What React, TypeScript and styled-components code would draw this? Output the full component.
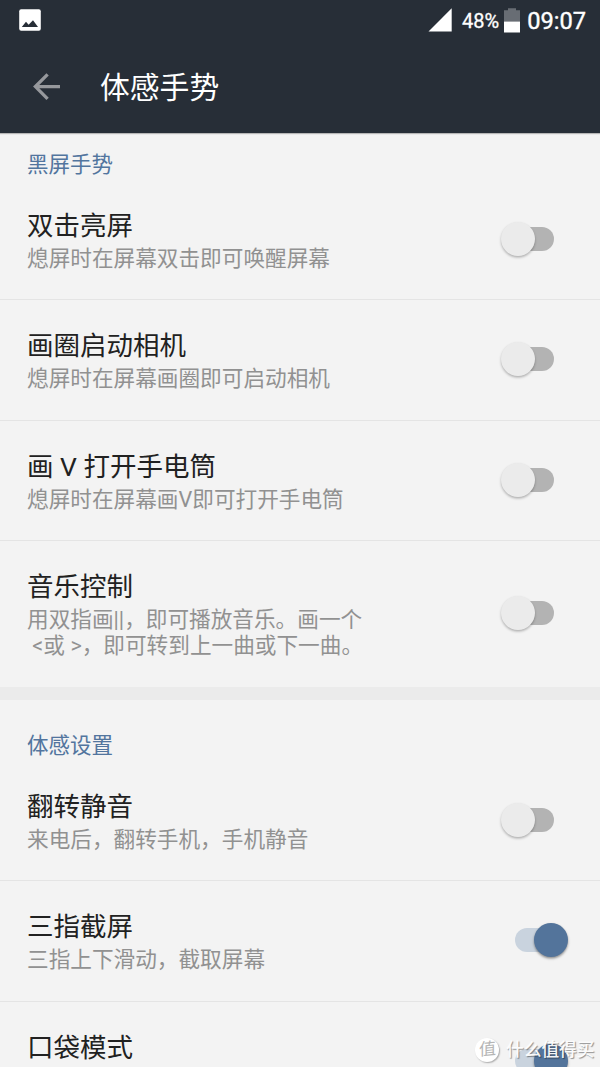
import React from "react";
import styled, { createGlobalStyle } from "styled-components";

const GlobalStyle = createGlobalStyle`
  * { box-sizing: border-box; }
  html, body { margin: 0; background: #f3f3f3; }
  body {
    font-family: Roboto, "Noto Sans CJK SC", sans-serif;
    overflow: hidden;
  }
`;

const Screen = styled.div`
  position: relative;
  width: 600px;
  height: 1067px;
  overflow: hidden;
  background: #f3f3f3;
`;

const Header = styled.header`
  height: 133.4px;
  background: #272e37;
  color: #fff;
  box-shadow: 0 1px 1px rgba(0, 0, 0, 0.25);
`;

const StatusBar = styled.div`
  display: flex;
  align-items: center;
  justify-content: space-between;
  height: 40px;
  padding: 0 14px 0 19px;
`;

const StatusGroup = styled.div`
  display: flex;
  align-items: center;
`;

const BatteryLevel = styled.span`
  margin: 1px 5px 0 10px;
  font-size: 20px;
  font-weight: 400;
  line-height: 24px;
  -webkit-text-stroke: 0.3px #fff;
`;

const Clock = styled.span`
  margin-left: 7px;
  margin-top: 1px;
  font-size: 23.6px;
  font-weight: 400;
  line-height: 28px;
  -webkit-text-stroke: 0.4px #fff;
`;

const Toolbar = styled.div`
  display: flex;
  align-items: center;
  height: 94px;
  padding-left: 33px;
`;

const PageTitle = styled.h1`
  margin: 2px 0 0 39px;
  font-size: 29.8px;
  font-weight: 400;
  line-height: 44px;
`;

const Section = styled.section``;

const SectionGap = styled.div`
  height: 13.4px;
  background: #ebebeb;
`;

const SectionTitle = styled.h2<{ $height: number }>`
  display: flex;
  align-items: flex-end;
  height: ${(p) => p.$height}px;
  margin: 0;
  padding: 0 27px;
  color: #52759e;
  font-size: 21.5px;
  font-weight: 400;
  line-height: 28px;
`;

const Row = styled.div<{ $tall?: boolean }>`
  display: flex;
  align-items: flex-start;
  justify-content: space-between;
  height: ${(p) => (p.$tall ? 146.8 : 120.56)}px;
  padding: 30px 32px 0 27px;
  box-shadow: 0 1px 0 #e4e4e4;

  &:last-child {
    box-shadow: none;
  }
`;

const RowTitle = styled.div`
  color: #212121;
  font-size: 26.5px;
  line-height: 33px;
`;

const RowSummary = styled.div`
  margin-top: 4px;
  color: #919191;
  font-size: 21.65px;
  line-height: 25.6px;
  white-space: pre;
`;

const SwitchBox = styled.div<{ $on?: boolean; $tall?: boolean }>`
  display: flex;
  align-items: center;
  justify-content: ${(p) => (p.$on ? "flex-end" : "flex-start")};
  width: 67px;
  height: 34px;
  margin-top: ${(p) => (p.$tall ? 26 : 13)}px;
`;

const Track = styled.div<{ $on?: boolean }>`
  display: flex;
  align-items: center;
  justify-content: ${(p) => (p.$on ? "flex-end" : "flex-start")};
  width: 53px;
  height: 24px;
  border-radius: 12px;
  background: ${(p) =>
    p.$on
      ? "linear-gradient(#c9d3de, #c9d3de) left / 40px 100% no-repeat"
      : "linear-gradient(#b3b3b3, #b3b3b3) right / 40px 100% no-repeat"};
`;

const Thumb = styled.div<{ $on?: boolean }>`
  width: 34px;
  height: 34px;
  flex: none;
  border-radius: 50%;
  background: ${(p) => (p.$on ? "#53749b" : "#ebebeb")};
  box-shadow: 0 1.5px 2.5px rgba(0, 0, 0, ${(p) => (p.$on ? 0.42 : 0.28)});
`;

const Watermark = styled.div`
  position: absolute;
  left: 475px;
  top: 1037px;
  display: flex;
  align-items: center;
  gap: 7px;
  color: rgba(255, 255, 255, 0.95);
  font-size: 17.7px;
  line-height: 24px;
  white-space: nowrap;
  text-shadow: 1px 1px 1px rgba(0, 0, 0, 0.4);
`;

const WatermarkSeal = styled.span`
  width: 24px;
  height: 24px;
  border-radius: 50%;
  background: #fff;
  color: #b5b5b5;
  font-size: 17px;
  line-height: 23px;
  text-align: center;
  text-shadow: none;
  box-shadow: 1px 1px 1.5px rgba(0, 0, 0, 0.3);
`;

const SealGlyph = styled.span`
  display: inline-block;
  transform: skewX(-6deg) rotate(-6deg);
`;

const WatermarkText = styled.span`
  font-weight: 500;
  padding-top: 1px;
`;

const PictureIcon = () => (
  <svg width="22" height="22" viewBox="0 0 22 22">
    <rect x="0.2" y="0.2" width="21.6" height="21.6" rx="2" fill="#fff" />
    <path d="M2.8 18L7 12.8l2.6 3L14 11.2 19 18z" fill="#272e37" />
  </svg>
);

const SignalIcon = () => (
  <svg width="24" height="24" viewBox="0 0 24 24">
    <path d="M0.5 23.6L23.7 0.3v23.3z" fill="#fff" />
  </svg>
);

const BatteryIcon = () => (
  <svg width="16" height="25" viewBox="0 0 16 25">
    <path d="M4 0.3h8v2h4V13.500H0V2.300h4z" fill="#686d74" />
    <path d="M0 13.500h16v11H0z" fill="#fff" />
  </svg>
);

const BackIcon = () => (
  <svg width="28" height="28" viewBox="0 0 28 28" fill="none" stroke="#96989c" strokeWidth="3.300">
    <path d="M27 13.600H3M14.600 1.400L2.400 13.600l12.200 12.200" />
  </svg>
);

interface Setting {
  title: string;
  summary?: string;
  on?: boolean;
  tall?: boolean;
}

const screenOff: Setting[] = [
  { title: "双击亮屏", summary: "熄屏时在屏幕双击即可唤醒屏幕" },
  { title: "画圈启动相机", summary: "熄屏时在屏幕画圈即可启动相机" },
  { title: "画 V 打开手电筒", summary: "熄屏时在屏幕画V即可打开手电筒" },
  {
    title: "音乐控制",
    summary: "用双指画||，即可播放音乐。画一个\n <或 >，即可转到上一曲或下一曲。",
    tall: true,
  },
];

const motion: Setting[] = [
  { title: "翻转静音", summary: "来电后，翻转手机，手机静音" },
  { title: "三指截屏", summary: "三指上下滑动，截取屏幕", on: true },
  { title: "口袋模式", on: true },
];

const SettingRow = ({ title, summary, on, tall }: Setting) => (
  <Row $tall={tall}>
    <div>
      <RowTitle>{title}</RowTitle>
      {summary && <RowSummary>{summary}</RowSummary>}
    </div>
    <SwitchBox $on={on} $tall={tall} role="switch" aria-checked={!!on}>
      <Track $on={on}>
        <Thumb $on={on} />
      </Track>
    </SwitchBox>
  </Row>
);

export default function App() {
  return (
    <Screen>
      <GlobalStyle />
      <Header>
        <StatusBar>
          <PictureIcon />
          <StatusGroup>
            <SignalIcon />
            <BatteryLevel>48%</BatteryLevel>
            <BatteryIcon />
            <Clock>09:07</Clock>
          </StatusGroup>
        </StatusBar>
        <Toolbar>
          <BackIcon />
          <PageTitle>体感手势</PageTitle>
        </Toolbar>
      </Header>
      <Section>
        <SectionTitle $height={45.2}>黑屏手势</SectionTitle>
        {screenOff.map((s) => (
          <SettingRow key={s.title} {...s} />
        ))}
      </Section>
      <SectionGap />
      <Section>
        <SectionTitle $height={59.1}>体感设置</SectionTitle>
        {motion.map((s) => (
          <SettingRow key={s.title} {...s} />
        ))}
      </Section>
      <Watermark>
        <WatermarkSeal>
          <SealGlyph>值</SealGlyph>
        </WatermarkSeal>
        <WatermarkText>什么值得买</WatermarkText>
      </Watermark>
    </Screen>
  );
}
